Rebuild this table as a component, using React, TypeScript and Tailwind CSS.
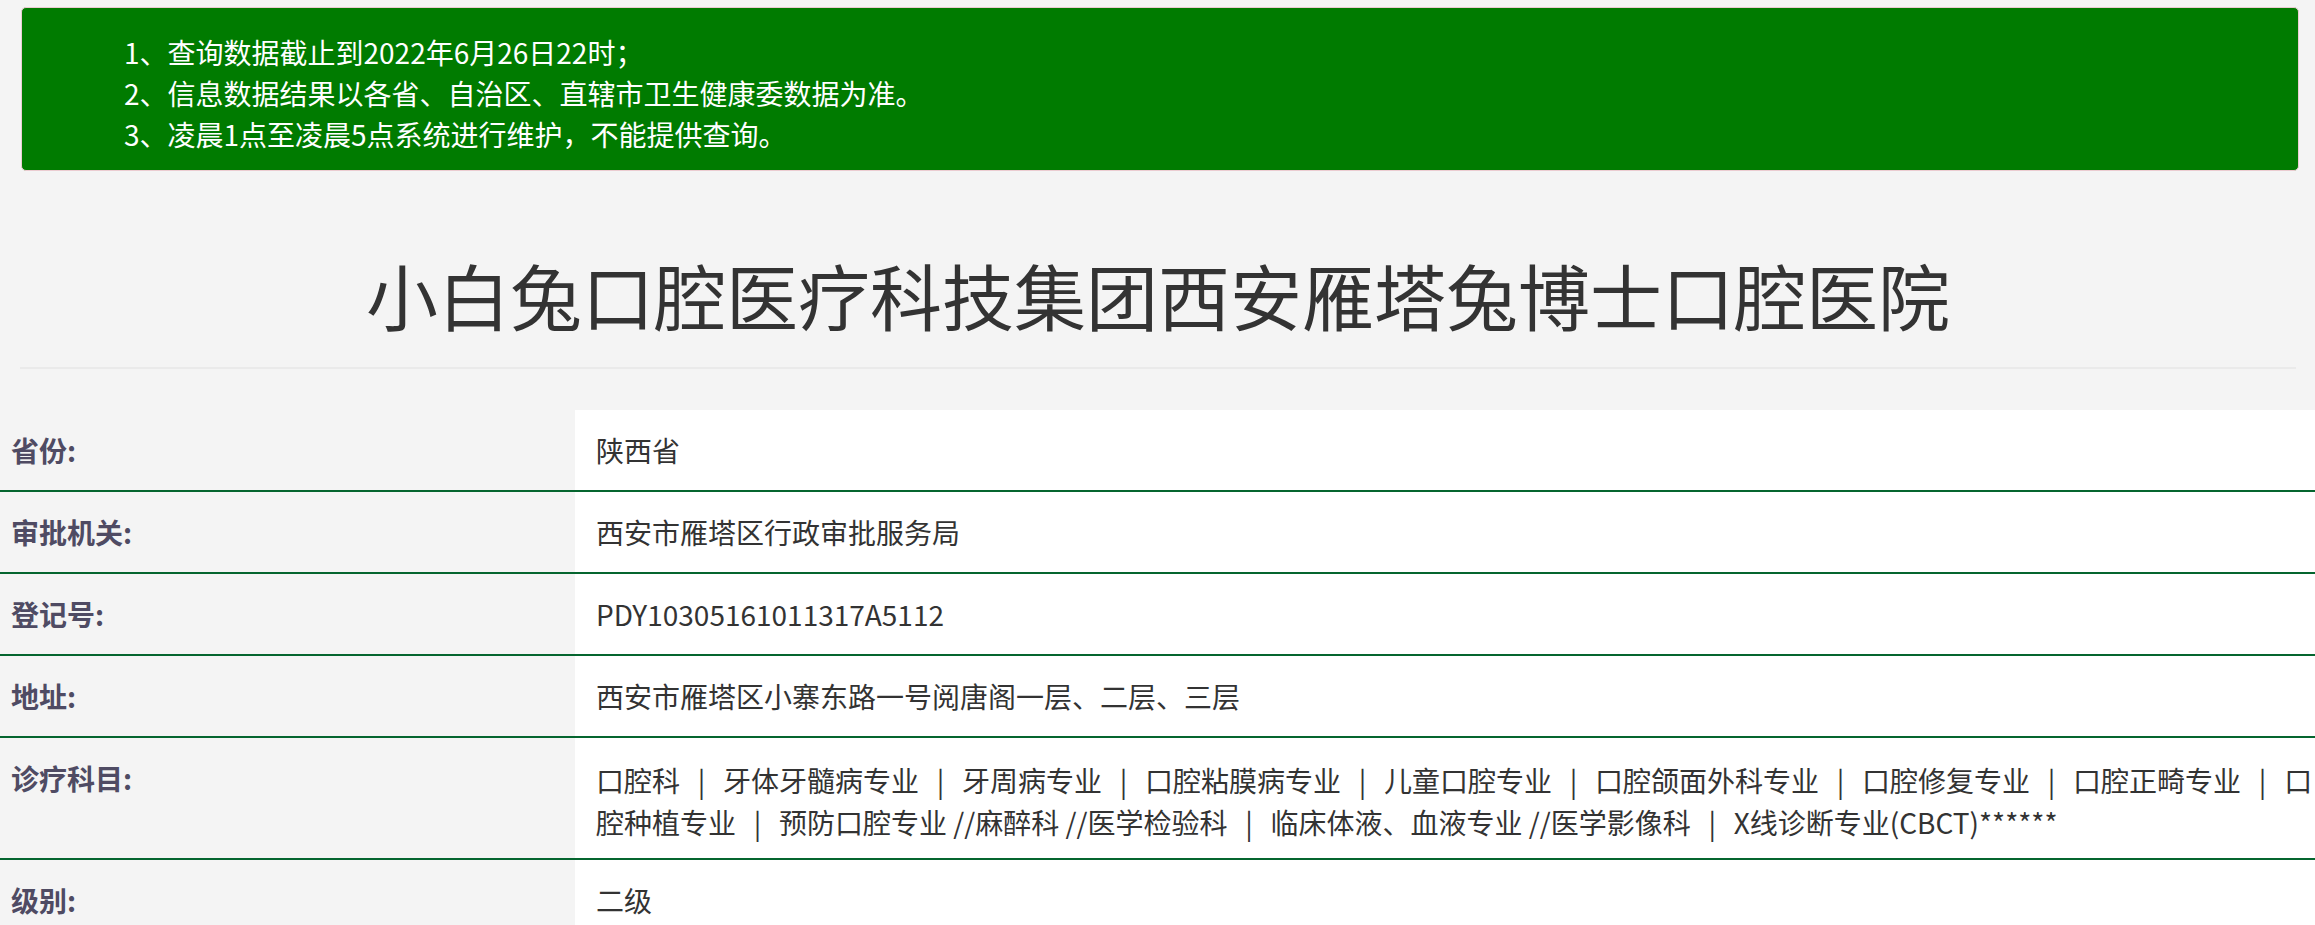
import React from "react";

const notices = [
  "1、查询数据截止到2022年6月26日22时；",
  "2、信息数据结果以各省、自治区、直辖市卫生健康委数据为准。",
  "3、凌晨1点至凌晨5点系统进行维护，不能提供查询。",
];

function Sep() {
  return <span className="inline-block w-[43px] text-center">|</span>;
}

function Row({ label, children }: { label: string; children: React.ReactNode }) {
  return (
    <div className="flex border-b-2 border-[#05652f]">
      <div className="w-[575px] shrink-0 py-[20px] pl-[11px] font-bold text-[#4f4b63] leading-[40px]">
        {label}
      </div>
      <div className="flex-1 bg-white py-[20px] pl-[21px] text-[#333] leading-[40px]">{children}</div>
    </div>
  );
}

export default function App() {
  return (
    <div
      className="min-h-screen bg-[#f4f4f4] text-[28px] pt-[7px]"
      style={{ fontFamily: '"Noto Sans CJK SC", "Noto Sans", sans-serif' }}
    >
      <div className="ml-[21px] mr-[16px] rounded-[5px] border border-[#ebccd1] bg-[#007b00] pt-[24px] pb-[15px] pl-[102px] text-white leading-[41px]">
        {notices.map((n) => (
          <div key={n}>{n}</div>
        ))}
      </div>

      <div className="mx-[20px] mr-[19px] mt-[83px] border-b-2 border-[#eaeaea] pb-[33px]">
        <h1 className="text-center text-[72px] leading-[80px] font-normal text-[#333]">
          小白兔口腔医疗科技集团西安雁塔兔博士口腔医院
        </h1>
      </div>

      <div className="mt-[41px]">
        <Row label="省份:">陕西省</Row>
        <Row label="审批机关:">西安市雁塔区行政审批服务局</Row>
        <Row label="登记号:">PDY10305161011317A5112</Row>
        <Row label="地址:">西安市雁塔区小寨东路一号阅唐阁一层、二层、三层</Row>
        <Row label="诊疗科目:">
          <div className="whitespace-nowrap leading-[42px] pt-[1px]">
            口腔科<Sep />牙体牙髓病专业<Sep />牙周病专业<Sep />口腔粘膜病专业<Sep />儿童口腔专业<Sep />口腔颌面外科专业<Sep />口腔修复专业<Sep />口腔正畸专业<Sep />口
          </div>
          <div className="whitespace-nowrap leading-[42px] -mb-[5px]">
            腔种植专业<Sep />预防口腔专业 //麻醉科 //医学检验科<Sep />临床体液、血液专业 //医学影像科<Sep />X线诊断专业(CBCT)******
          </div>
        </Row>
        <Row label="级别:">二级</Row>
      </div>
    </div>
  );
}
